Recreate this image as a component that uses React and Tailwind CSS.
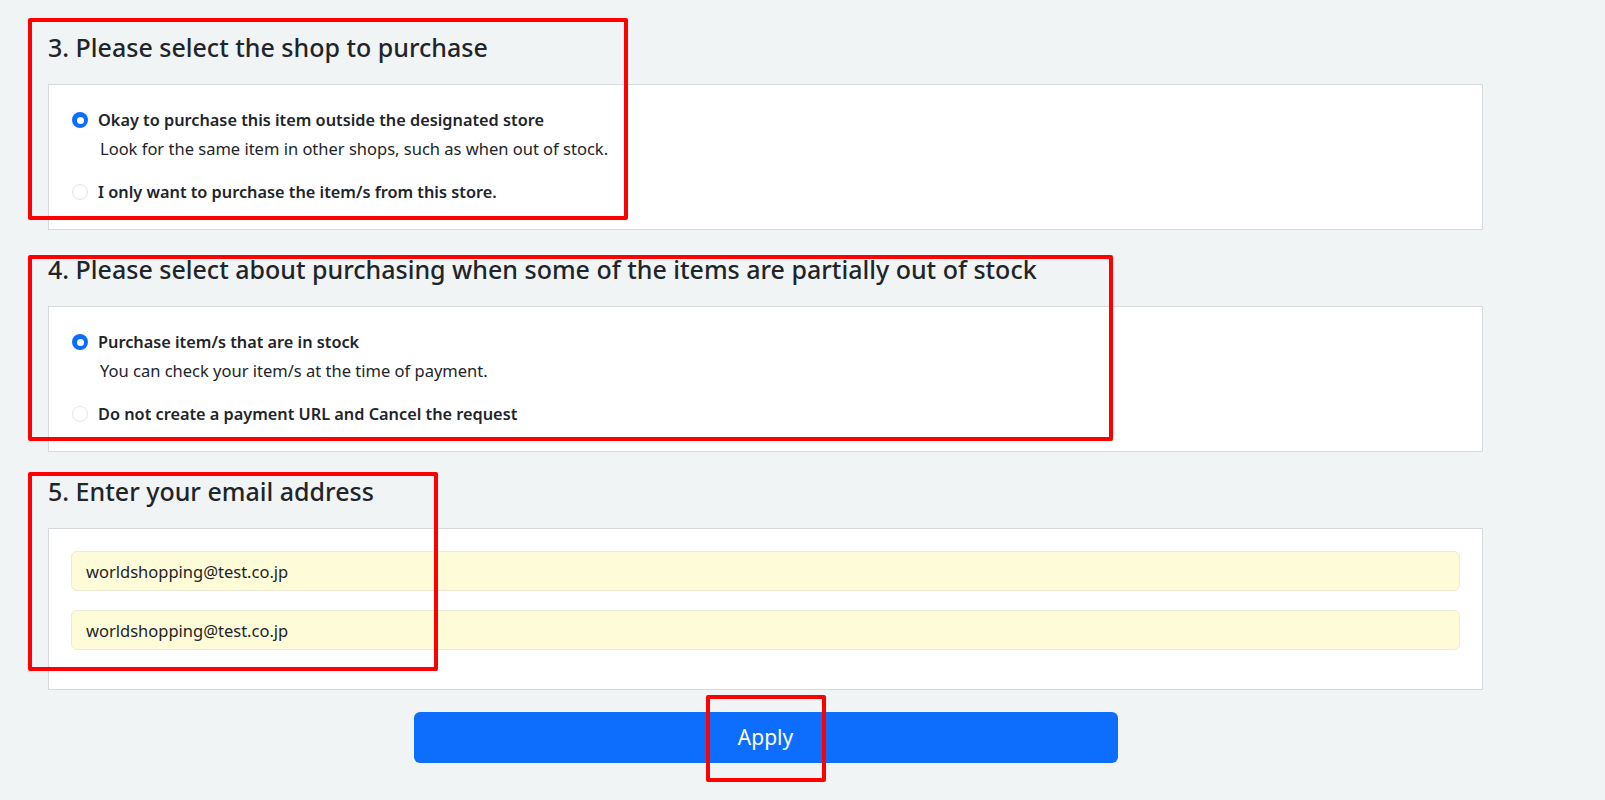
import React, { useState } from 'react';

const font = { fontFamily: '"Noto Sans", "Open Sans", sans-serif' };

const RadioOption = ({ checked, label, desc, onClick }) => (
  <div>
    <label className="flex items-center gap-[10px] cursor-pointer" onClick={onClick}>
      {checked ? (
        <span className="w-4 h-4 rounded-full bg-[#0d6efd] flex items-center justify-center shrink-0">
          <span className="w-[7px] h-[7px] rounded-full bg-white" />
        </span>
      ) : (
        <span className="w-4 h-4 rounded-full border border-[#e3e6e9] bg-white shrink-0" />
      )}
      <span className="text-[16.3px] leading-6 font-semibold text-[#212529]">{label}</span>
    </label>
    {desc && <div className="pl-[28px] mt-[5px] text-[16.5px] leading-6 text-[#212529]">{desc}</div>}
  </div>
);

const Section = ({ title, children, first }) => (
  <div className={first ? 'pt-[33px]' : 'pt-[25px]'}>
    <h4 className="text-[25px] leading-[29px] font-medium text-[#212529]">{title}</h4>
    <div className="mt-[22px] bg-white border border-[#d7dadc]">{children}</div>
  </div>
);

const App = () => {
  const [shop, setShop] = useState('any');
  const [stock, setStock] = useState('partial');
  const [email, setEmail] = useState('worldshopping@test.co.jp');
  const [email2, setEmail2] = useState('worldshopping@test.co.jp');

  return (
    <div className="relative min-h-[800px] bg-[#f1f4f5] overflow-hidden" style={font}>
      <div className="ml-[48px] w-[1435px]">
        <Section title="3. Please select the shop to purchase" first>
          <div className="px-[23px] pt-[23px] pb-[25px] flex flex-col gap-[19px]">
            <RadioOption
              checked={shop === 'any'}
              onClick={() => setShop('any')}
              label="Okay to purchase this item outside the designated store"
              desc="Look for the same item in other shops, such as when out of stock."
            />
            <RadioOption
              checked={shop === 'this'}
              onClick={() => setShop('this')}
              label="I only want to purchase the item/s from this store."
            />
          </div>
        </Section>

        <Section title="4. Please select about purchasing when some of the items are partially out of stock">
          <div className="px-[23px] pt-[23px] pb-[25px] flex flex-col gap-[19px]">
            <RadioOption
              checked={stock === 'partial'}
              onClick={() => setStock('partial')}
              label="Purchase item/s that are in stock"
              desc="You can check your item/s at the time of payment."
            />
            <RadioOption
              checked={stock === 'cancel'}
              onClick={() => setStock('cancel')}
              label="Do not create a payment URL and Cancel the request"
            />
          </div>
        </Section>

        <Section title="5. Enter your email address">
          <div className="px-[22px] pt-[22px] pb-[39px] flex flex-col gap-[19px]">
            <input
              value={email}
              onChange={e => setEmail(e.target.value)}
              className="h-10 w-full rounded-md border border-[#ecebd4] bg-[#fefbd8] px-[14px] text-[16.5px] text-[#212529] outline-none"
            />
            <input
              value={email2}
              onChange={e => setEmail2(e.target.value)}
              className="h-10 w-full rounded-md border border-[#ecebd4] bg-[#fefbd8] px-[14px] text-[16.5px] text-[#212529] outline-none"
            />
          </div>
        </Section>

        <div className="flex justify-center pt-[22px]">
          <button className="w-[704px] h-[51px] rounded-md bg-[#0d6efd] text-white text-[21px]">Apply</button>
        </div>
      </div>

      {/* red annotation boxes */}
      <div className="absolute left-[28px] top-[18px] w-[600px] h-[202px] border-4 border-[#f00] rounded-[2px] pointer-events-none" />
      <div className="absolute left-[28px] top-[255px] w-[1085px] h-[186px] border-4 border-[#f00] rounded-[2px] pointer-events-none" />
      <div className="absolute left-[28px] top-[472px] w-[410px] h-[199px] border-4 border-[#f00] rounded-[2px] pointer-events-none" />
      <div className="absolute left-[706px] top-[695px] w-[120px] h-[87px] border-4 border-[#f00] rounded-[2px] pointer-events-none" />
    </div>
  );
};

export default App;
